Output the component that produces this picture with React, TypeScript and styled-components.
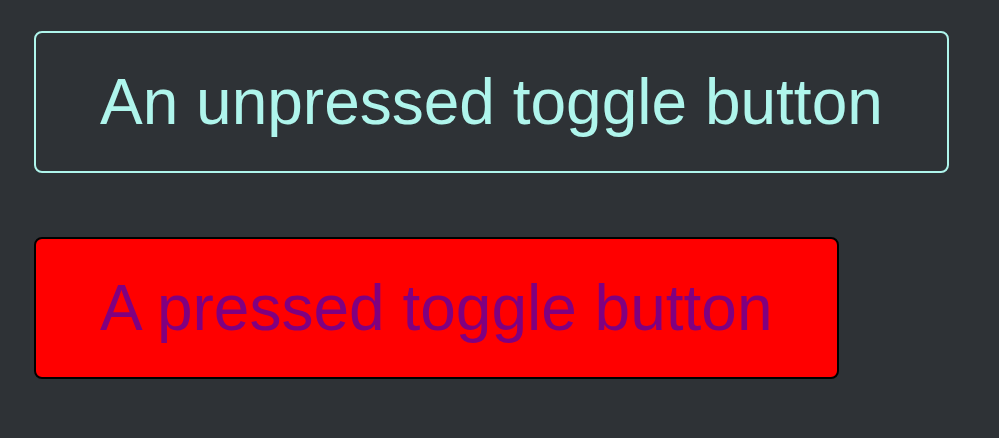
import React, { useState } from 'react';
import styled, { createGlobalStyle } from "styled-components";


const GlobalStyle = createGlobalStyle`
    html, body {
        margin: 0;
        background-color: #2e3236;
    }
`


function App() {
    const [first, setFirst] = useState(false);
    const [second, setSecond] = useState(true);

    return (
        <Page>
            <GlobalStyle />
            <ToggleButton $pressed={first} onClick={() => setFirst(!first)}>
                An unpressed toggle button
            </ToggleButton>
            <ToggleButton $pressed={second} onClick={() => setSecond(!second)}>
                A pressed toggle button
            </ToggleButton>
        </Page>
    );
}

export default App;


const Page = styled.div`
    display: flex;
    flex-direction: column;
    align-items: flex-start;
    gap: 64px;
    padding: 31px 34px;
    min-height: 100vh;
    box-sizing: border-box;
`

const ToggleButton = styled.button<{ $pressed: boolean }>`
    font-family: "Liberation Sans", Arial, sans-serif;
    font-size: 64px;
    line-height: normal;
    padding: 32px 64px;
    border-radius: 8px;
    border: 2px solid ${p => p.$pressed ? '#000000' : '#aff5ec'};
    background-color: ${p => p.$pressed ? '#ff0000' : 'transparent'};
    color: ${p => p.$pressed ? '#800080' : '#aff5ec'};
    cursor: pointer;
`
